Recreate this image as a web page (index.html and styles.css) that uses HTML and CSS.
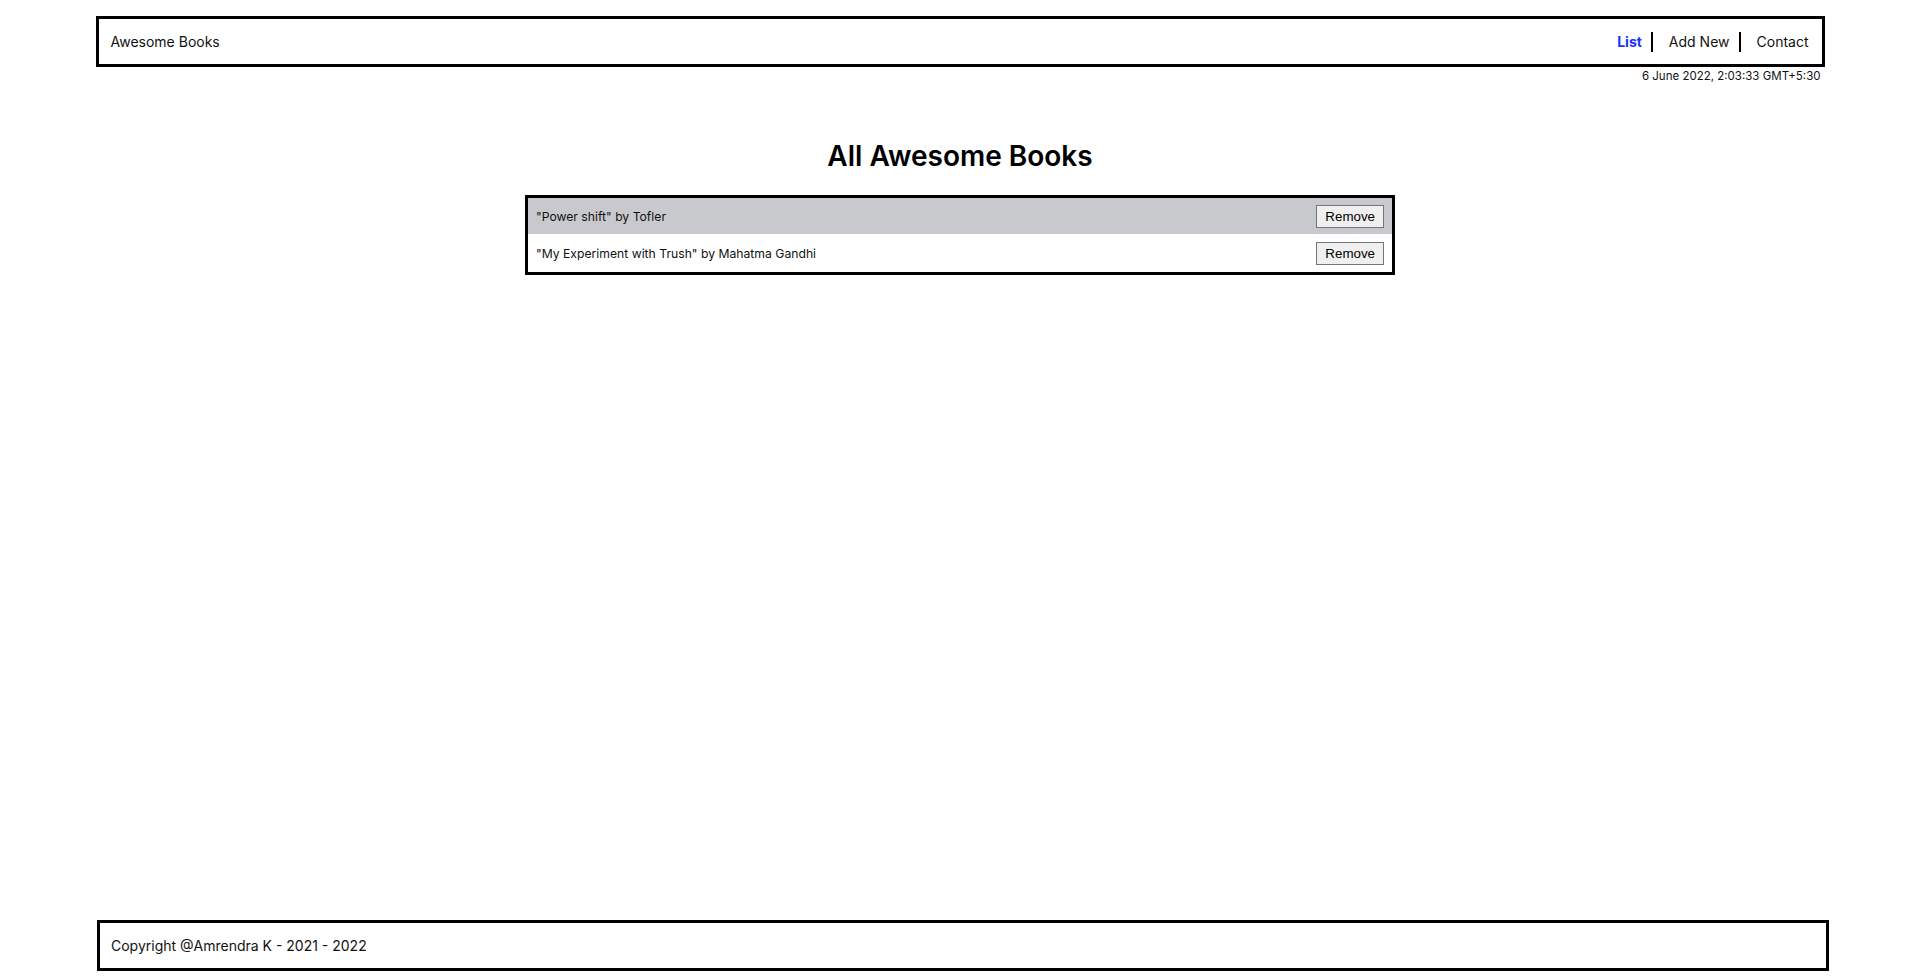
FILE: index.html
```html
<!DOCTYPE html>
<html lang="en">
<head>
<meta charset="utf-8">
<title>Awesome Books</title>
<link rel="stylesheet" href="styles.css">
</head>
<body>
<div class="page">
  <header class="topbar">
    <span class="brand">Awesome Books</span>
    <nav>
      <ul class="nav">
        <li class="nav-item active">List</li>
        <li class="nav-item">Add New</li>
        <li class="nav-item last">Contact</li>
      </ul>
    </nav>
  </header>
  <div class="date">6 June 2022, 2:03:33 GMT+5:30</div>
  <main class="main">
    <h1 class="title">All Awesome Books</h1>
    <ul class="books">
      <li class="book odd"><span class="book-text">"Power shift" by Tofler</span><button class="remove">Remove</button></li>
      <li class="book"><span class="book-text">"My Experiment with Trush" by Mahatma Gandhi</span><button class="remove">Remove</button></li>
    </ul>
  </main>
  <footer class="footer">Copyright @Amrendra K - 2021 - 2022</footer>
</div>
</body>
</html>
```

FILE: styles.css
```css
html, body {
  margin: 0;
  padding: 0;
  background: #fff;
}
body {
  font-family: "Inter", "Noto Sans", sans-serif;
  color: #111;
}
.page {
  min-height: 980px;
  box-sizing: border-box;
  display: flex;
  flex-direction: column;
  align-items: center;
  padding: 16px 0 9px;
}
.topbar {
  box-sizing: border-box;
  width: 1729px;
  height: 51px;
  border: 3px solid #000;
  display: flex;
  align-items: center;
  justify-content: space-between;
  padding: 0 0 0 12px;
}
.brand {
  font-size: 14px;
}
.nav {
  list-style: none;
  margin: 0;
  padding: 0;
  display: flex;
  align-items: center;
}
.nav-item {
  font-size: 14px;
  line-height: 20px;
  padding: 0 9px 0 16px;
  border-right: 2px solid #000;
}
.nav-item.active {
  color: #1534ff;
  font-weight: 700;
  padding-left: 0;
}
.nav-item.last {
  border-right: none;
  padding-right: 13px;
}
.date {
  width: 1729px;
  text-align: right;
  font-size: 11.5px;
  line-height: 14px;
  margin-top: 2px;
  padding-right: 4px;
  box-sizing: border-box;
}
.main {
  display: flex;
  flex-direction: column;
  align-items: center;
}
.title {
  margin: 53px 0 0;
  font-size: 28px;
  font-weight: 600;
  line-height: 40px;
  color: #000;
}
.books {
  list-style: none;
  margin: 19px 0 0;
  padding: 0;
  width: 864px;
  border: 3px solid #000;
}
.book {
  display: flex;
  align-items: center;
  justify-content: space-between;
  padding: 0 8px;
  height: 38px;
  font-size: 12.2px;
}
.book.odd {
  background: #c8c9cd;
  height: 36px;
}
.remove {
  font-family: "Liberation Sans", Arial, sans-serif;
  font-size: 13.33px;
  background: #efefef;
  border: 1px solid #767676;
  border-radius: 0;
  padding: 3px 8px;
  height: 23px;
  color: #000;
}
.footer {
  margin-top: auto;
  box-sizing: border-box;
  width: 1732px;
  height: 51px;
  border: 3px solid #000;
  display: flex;
  align-items: center;
  padding-left: 11px;
  font-size: 14px;
  transform: translateX(3px);
}
```
